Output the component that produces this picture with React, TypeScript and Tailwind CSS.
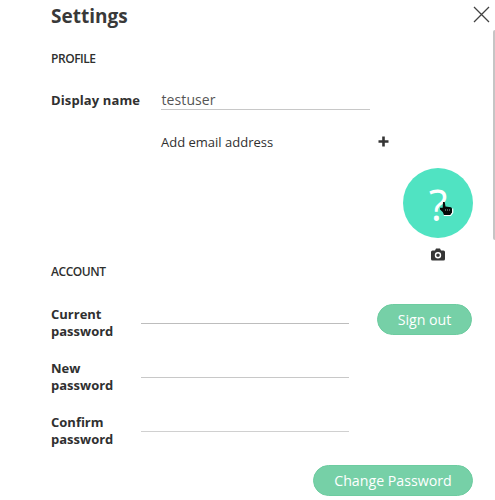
import React from "react";

function SectionTitle({ children }: { children: React.ReactNode }) {
  return <h2 className="h-[18px] pt-px text-[12px] leading-[18px] font-semibold tracking-[-0.45px] text-[#2e2f2e]">{children}</h2>;
}

function PasswordRow({ first, line }: { first: string; line: string }) {
  return (
    <label className="flex h-[54px] items-start">
      <span className="w-[90px] pt-px text-[13px] leading-[17.3px] font-bold">
        {first}
        <br />
        password
      </span>
      <span className={`h-[19px] w-[208px] border-b ${line}`} />
    </label>
  );
}

function PillButton({ children, width }: { children: string; width: string }) {
  return (
    <button
      className={`flex h-[31px] items-center justify-center rounded-full border border-[#6dcca0] bg-[#76d0a7] text-[14.2px] text-white ${width}`}
    >
      {children}
    </button>
  );
}

function HandCursor() {
  return (
    <svg className="absolute left-[36px] top-[33px]" width="15" height="16" viewBox="0 0 15 16">
      <path d="M4 1h1.700L6.500 5.500l5.500.8q1 .4 1 1.700v4l-1.500 2H5l-1.300-3L1 8.500V6.800h2.700z" fill="#050b09" />
      <path d="M4.800 14.500h6.800l2.100-3V7.500" fill="none" stroke="white" strokeWidth="1.200" />
      <path d="M6.500 8v2M8.500 8v2M10.500 8v2" stroke="#829b95" strokeWidth=".6" />
    </svg>
  );
}

export default function App() {
  return (
    <div className="relative h-[500px] w-[495px] overflow-hidden bg-white pl-[51px] font-['Open_Sans','Noto_Sans',sans-serif] text-[#303030]">
      <header className="flex h-[49px] items-start justify-between pr-[5px]">
        <h1 className="pt-[3px] text-[19px] leading-[27px] font-bold text-[#393939]">Settings</h1>
        <button aria-label="Close" className="mt-[6px]">
          <svg width="17" height="17" viewBox="0 0 17 17">
            <path d="M1 1l15 15M16 1L1 16" stroke="#424242" strokeWidth="1.300" />
          </svg>
        </button>
      </header>

      <section className="h-[213px]">
        <SectionTitle>PROFILE</SectionTitle>
        <div className="mt-[23px] flex h-[20px] items-start">
          <span className="w-[110px] text-[13px] leading-[20px] font-bold tracking-[0.12px]">Display name</span>
          <span className="h-[20px] w-[209px] border-b border-[#c8c8c8] pl-[0.5px] text-[14px] leading-[19px] tracking-[0.1px] text-[#555]">
            testuser
          </span>
        </div>
        <div className="mt-[22px] ml-[110px] flex h-[20px] w-[228px] items-center justify-between">
          <span className="text-[13px] leading-[20px]">Add email address</span>
          <svg className="-mt-[2px]" width="11" height="11" viewBox="0 0 11 11">
            <path d="M5.500 .5v10M.5 5.500h10" stroke="#353535" strokeWidth="2.600" />
          </svg>
        </div>
        <div className="mt-[16px] ml-[352px] flex w-[70px] flex-col items-center">
          <div className="relative flex h-[70px] w-[70px] items-center justify-center rounded-full bg-[#50e3c2] pt-[2px] text-[43px] leading-none text-white">
            ?
            <HandCursor />
          </div>
          <svg className="mt-[10px]" width="14" height="13" viewBox="0 0 14 13">
            <path
              d="M1.500 2.500H4L5 .5h4l1 2h2.500q1.500 0 1.500 1.500v7q0 1.500-1.500 1.500h-11Q0 12.500 0 11V4q0-1.500 1.500-1.500z"
              fill="#353535"
            />
            <circle cx="7" cy="7.200" r="2.500" fill="none" stroke="white" strokeWidth="1.400" />
          </svg>
        </div>
      </section>

      <section>
        <SectionTitle>ACCOUNT</SectionTitle>
        <div className="flex pt-[24px]">
          <div className="-mt-px h-[161px] w-[326px] pt-[2px]">
            <PasswordRow first="Current" line="border-[#bdbdbd]" />
            <PasswordRow first="New" line="border-[#c8c8c8]" />
            <PasswordRow first="Confirm" line="border-[#d0d0d0]" />
          </div>
          <PillButton width="w-[95px]">Sign out</PillButton>
        </div>
        <div className="ml-[262px] pt-px">
          <PillButton width="w-[160px]">Change Password</PillButton>
        </div>
      </section>
      <div className="absolute top-[30px] right-0 h-[210px] w-[2px] rounded-l bg-[#c5c5c5]" />
    </div>
  );
}
